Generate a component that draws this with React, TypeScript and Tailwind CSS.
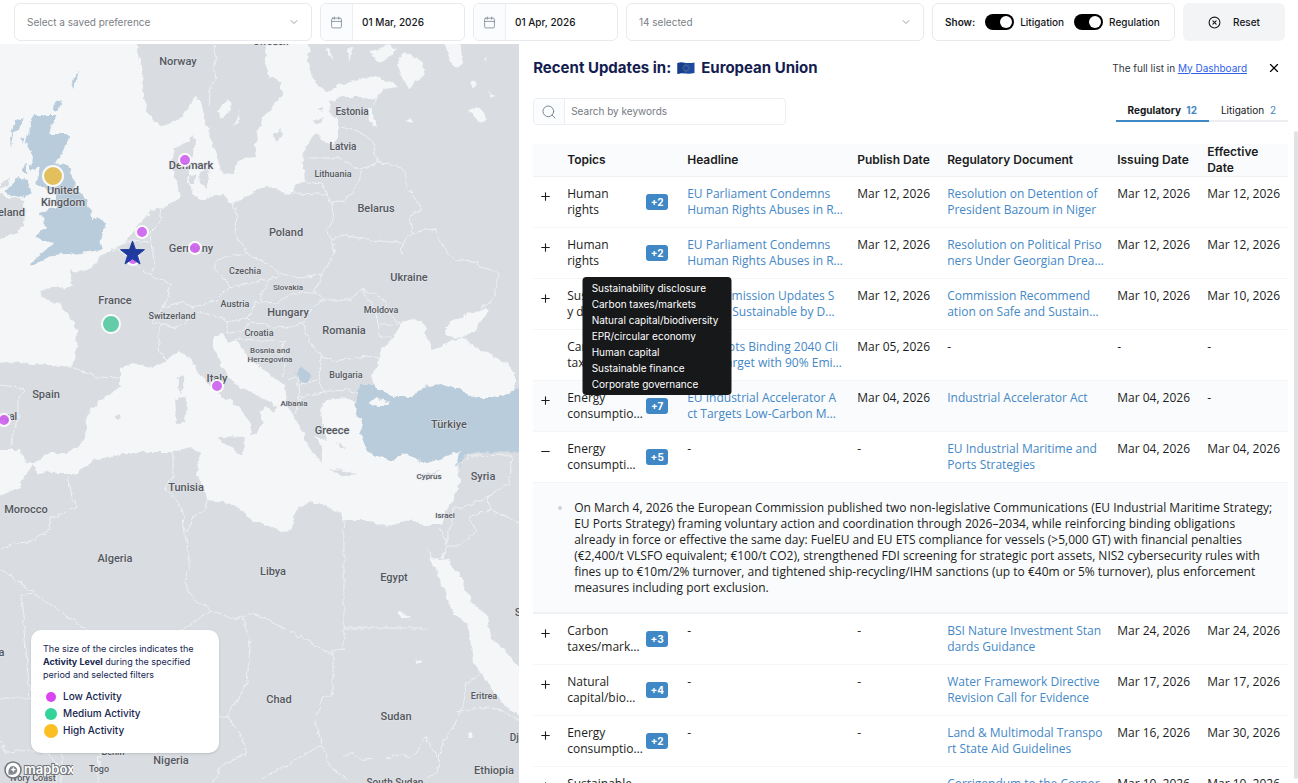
import { ReactNode, useState } from "react";
import { Calendar, ChevronDown, CircleX, Minus, Plus, Search, X } from "lucide-react";

interface UpdateRow {
  topic: string[];
  more?: string;
  moreTopics?: string[];
  headline: string[];
  published: string;
  document: string[];
  issued: string;
  effective: string;
  toggle?: "plus" | "minus";
  details?: string[];
}

const rows: UpdateRow[] = [
  {
    topic: ["Human", "rights"],
    more: "+2",
    headline: ["EU Parliament Condemns", "Human Rights Abuses in R…"],
    published: "Mar 12, 2026",
    document: ["Resolution on Detention of", "President Bazoum in Niger"],
    issued: "Mar 12, 2026",
    effective: "Mar 12, 2026",
    toggle: "plus",
  },
  {
    topic: ["Human", "rights"],
    more: "+2",
    headline: ["EU Parliament Condemns", "Human Rights Abuses in R…"],
    published: "Mar 12, 2026",
    document: ["Resolution on Political Priso", "ners Under Georgian Drea…"],
    issued: "Mar 12, 2026",
    effective: "Mar 12, 2026",
    toggle: "plus",
  },
  {
    topic: ["Sustainabilit", "y disclosure"],
    headline: ["EU Commission Updates S", "afe and Sustainable by D…"],
    published: "Mar 12, 2026",
    document: ["Commission Recommend", "ation on Safe and Sustain…"],
    issued: "Mar 10, 2026",
    effective: "Mar 10, 2026",
    toggle: "plus",
  },
  {
    topic: ["Carbon", "taxes/mark…"],
    headline: ["EU Adopts Binding 2040 Cli", "mate Target with 90% Emi…"],
    published: "Mar 05, 2026",
    document: [],
    issued: "-",
    effective: "-",
  },
  {
    topic: ["Energy", "consumptio…"],
    more: "+7",
    moreTopics: [
      "Sustainability disclosure",
      "Carbon taxes/markets",
      "Natural capital/biodiversity",
      "EPR/circular economy",
      "Human capital",
      "Sustainable finance",
      "Corporate governance",
    ],
    headline: ["EU Industrial Accelerator A", "ct Targets Low-Carbon M…"],
    published: "Mar 04, 2026",
    document: ["Industrial Accelerator Act"],
    issued: "Mar 04, 2026",
    effective: "-",
    toggle: "plus",
  },
  {
    topic: ["Energy", "consumpti…"],
    more: "+5",
    headline: [],
    published: "-",
    document: ["EU Industrial Maritime and", "Ports Strategies"],
    issued: "Mar 04, 2026",
    effective: "Mar 04, 2026",
    toggle: "minus",
    details: [
      "On March 4, 2026 the European Commission published two non-legislative Communications (EU Industrial Maritime Strategy;",
      "EU Ports Strategy) framing voluntary action and coordination through 2026–2034, while reinforcing binding obligations",
      "already in force or effective the same day: FuelEU and EU ETS compliance for vessels (>5,000 GT) with financial penalties",
      "(€2,400/t VLSFO equivalent; €100/t CO2), strengthened FDI screening for strategic port assets, NIS2 cybersecurity rules with",
      "fines up to €10m/2% turnover, and tightened ship-recycling/IHM sanctions (up to €40m or 5% turnover), plus enforcement",
      "measures including port exclusion.",
    ],
  },
  {
    topic: ["Carbon", "taxes/mark…"],
    more: "+3",
    headline: [],
    published: "-",
    document: ["BSI Nature Investment Stan", "dards Guidance"],
    issued: "Mar 24, 2026",
    effective: "Mar 24, 2026",
    toggle: "plus",
  },
  {
    topic: ["Natural", "capital/bio…"],
    more: "+4",
    headline: [],
    published: "-",
    document: ["Water Framework Directive", "Revision Call for Evidence"],
    issued: "Mar 17, 2026",
    effective: "Mar 17, 2026",
    toggle: "plus",
  },
  {
    topic: ["Energy", "consumptio…"],
    more: "+2",
    headline: [],
    published: "-",
    document: ["Land & Multimodal Transpo", "rt State Aid Guidelines"],
    issued: "Mar 16, 2026",
    effective: "Mar 30, 2026",
    toggle: "plus",
  },
  {
    topic: ["Sustainable", "finance"],
    headline: [],
    published: "-",
    document: ["Corrigendum to the Corpor", "ate Directive"],
    issued: "Mar 10, 2026",
    effective: "Mar 10, 2026",
    toggle: "plus",
  },
];

const MAINLAND =
  "M309 44 309 47 308 63 312 77 320 87 327 92 340 85 357 80 377 75 383 80 395 83 397 88 385 90 375 100 360 97 343 97 330 102 329 112 338 120 338 137 331 147 322 138 316 132 305 147 303 160 305 183 295 184 293 192 285 195 277 187 260 188 247 197 238 200 230 203 223 195 213 197 200 200 191 191 187 180 191 167 193 155 195 143 193 135 187 142 175 147 172 163 177 183 180 197 167 207 152 210 143 220 137 227 128 240 117 248 100 255 97 263 87 270 80 272 70 270 72 287 53 288 40 290 43 298 60 305 70 317 77 330 76 350 72 367 50 365 17 363 -9 362 -9 450 20 450 27 463 33 463 50 453 67 453 82 443 88 428 85 418 97 402 120 387 120 368 133 363 153 368 167 360 177 351 190 357 195 370 207 382 217 393 233 402 243 413 252 425 250 437 255 434 263 422 258 412 264 407 275 412 277 406 260 397 247 390 233 383 220 363 213 347 213 337 223 333 228 343 235 338 240 345 247 357 260 367 273 377 285 385 287 403 293 415 303 433 310 450 322 462 323 447 313 436 327 441 323 423 320 410 327 400 347 398 357 403 355 413 363 423 360 433 367 450 375 455 393 462 402 453 413 457 423 463 440 460 453 453 459 453 457 467 460 483 453 500 445 513 442 525 427 525 410 520 387 527 367 520 343 520 342 515 325 505 310 502 298 507 293 518 295 523 287 533 273 528 260 522 253 522 245 512 230 503 208 500 203 487 197 473 200 453 190 447 173 452 150 452 117 455 93 460 77 473 57 473 37 472 32 465 27 473 20 487 -9 500 -9 795 530 795 530 35 309 35Z";

const SCANDINAVIA =
  "M138 35 138 44 140 60 143 77 143 97 147 112 155 122 163 126 173 122 185 112 193 100 197 97 202 105 205 120 210 137 215 150 218 163 223 174 233 173 238 162 248 158 255 157 256 143 258 130 263 117 273 107 282 95 282 83 270 77 265 63 265 52 268 35Z";

const ISLANDS = [
  "M-9 190 6 196 23 200 26 220 17 233 -9 242Z",
  "M2 182 10 178 8 186 0 190Z",
  "M177 378 184 373 183 387 181 394Z",
  "M175 400 185 396 187 403 185 422 177 424Z",
  "M217 437 245 436 243 454 230 448Z",
  "M330 470 345 471 357 474 345 476Z",
  "M422 474 433 473 442 469 433 477Z",
  "M113 417 120 414 122 418 117 420Z",
  "M199 172 208 170 210 178 206 188 200 183Z",
  "M189 176 196 175 196 183 190 183Z",
  "M274 135 282 128 281 137 276 143Z",
  "M313 121 325 116 321 123 314 124Z",
  "M317 109 324 108 322 112Z",
  "M336 443 345 447 341 449Z",
];

const UNITED_KINGDOM =
  "M35 115 57 115 48 133 68 133 69 138 60 157 55 164 63 163 72 173 75 187 87 200 92 220 100 218 106 223 103 233 99 240 102 250 80 253 53 255 43 260 32 266 30 263 47 250 53 243 35 237 47 227 40 213 57 207 53 190 42 188 35 183 40 168 30 172 33 157 26 143 30 127Z";

const BLUE_ISLANDS = [
  "M5 192 17 178 27 180 32 193 25 198 14 196Z",
  "M15 121 24 118 20 127 13 133 11 147 10 138Z",
  "M20 137 25 139 24 145Z",
  "M22 168 26 164 26 174Z",
  "M54 103 62 100 58 111 53 109Z",
  "M71 82 79 71 77 79 73 90Z",
];

const TURKEY =
  "M357 398 360 385 373 385 375 387 393 396 410 396 423 387 440 384 460 390 477 398 498 398 515 390 530 386 530 450 493 452 477 453 463 457 460 467 456 466 459 453 453 453 440 460 423 463 413 457 402 453 393 462 375 455 367 450 360 433 363 423 355 413Z";

const WATER = [
  "M372 377 378 362 382 350 392 338 403 322 415 318 427 325 425 333 433 350 448 342 463 338 477 348 507 363 515 373 515 390 498 398 477 398 460 390 440 384 423 387 410 396 393 396 375 387Z",
  "M445 330 450 322 467 313 490 309 482 320 473 332 460 338 448 337Z",
  "M366 403 377 398 391 402 378 407Z",
  "M422 538 426 547 434 560 447 558 460 577 472 602 487 615 490 637 505 650 530 680 530 722 507 707 490 687 473 663 470 637 465 623 453 612 445 593 433 563Z",
  "M403 50 423 63 425 75 408 88 397 65Z",
  "M442 35 460 35 462 62 457 68 450 60Z",
  "M217 112 227 99 232 103 228 113 220 118Z",
  "M233 128 241 110 238 122Z",
  "M368 108 372 108 376 128 371 126Z",
  "M470 110 476 106 487 118 483 124 477 121Z",
  "M470 83 476 80 478 84 473 87Z",
  "M405 121 411 118 413 123Z",
  "M487 90 495 97 493 98Z",
  "M484 57 487 57 486 63Z",
  "M326 50 332 60 330 48Z",
  "M347 50 350 62 351 47Z",
  "M370 52 380 64 398 50 388 44 378 50Z",
  "M396 613 401 610 410 617 405 619Z",
  "M467 733 472 732 473 738 468 738Z",
  "M415 663 422 660 418 665Z",
];

const BORDERS = [
  "M213 44 217 57 213 67 216 78 210 90 209 107",
  "M340 127 353 130 368 137 373 140 378 162",
  "M377 98 371 110",
  "M307 158 342 158 360 170 378 162 403 168 407 187 423 210 410 215 413 233 402 243 370 240 343 235 332 240",
  "M360 170 360 177 352 193 343 201 330 202 322 183 305 182",
  "M293 193 325 194 332 203 333 220 326 230 332 240 335 253 322 275 300 278 280 273 260 260 247 253 235 233 237 217 233 203",
  "M402 243 401 256M413 233 435 228 442 245 455 260 473 262 498 273 497 280 495 297 480 309",
  "M247 253 228 256 217 260 214 268 230 287 250 283 268 279 285 275",
  "M268 280 262 292 262 302 277 303 293 293 315 292 322 300 350 300 362 290 375 308 378 323 380 338 390 338",
  "M322 275 318 285 315 292M322 300 313 307 303 323 310 343 322 357 335 361 355 358 367 356 380 358",
  "M362 290 383 298 388 313 400 323 380 325",
  "M230 287 217 300 193 307 180 302 163 307 167 297 171 283 153 278 143 270 130 258 117 248",
  "M162 208 160 223 150 233 152 250 155 262 152 273M120 243 134 241 149 243",
  "M163 307 152 323 160 323 158 337 160 353 167 360M160 323 173 328 182 325 197 312 213 315 227 322 248 318 257 302 262 302",
  "M227 322 227 333 240 332 252 322 248 318M252 322 268 326 285 328 303 323",
  "M236 338 256 340 273 340 285 342 280 356 285 365 283 376",
  "M322 357 318 377 323 392 345 390 358 393",
  "M287 380 298 376 300 397 295 413M300 385 322 380M300 397 323 392",
  "M72 367 97 377 120 378M-2 385 20 387 27 390 18 398 18 420 13 433 12 447",
  "M456 467 470 456 512 455",
  "M68 475 72 497 77 507 50 518 50 530 30 542 13 543 -2 552",
  "M173 453 173 477 166 487 182 510 185 533 190 567 185 582 193 598 212 610 182 630M207 500 206 507 193 517 187 533",
  "M212 610 235 620 248 614 260 615 333 655M243 617 250 645 247 683 227 717 240 733 247 753 220 767 213 783M227 717 215 715",
  "M333 650 333 696 323 696 315 720 322 745 283 767 260 780M322 745 330 767 348 780",
  "M343 520 344 540 344 649 333 650M344 628 428 628",
  "M-2 568 87 630M37 594 21 595 30 698M-2 698 60 698",
  "M483 672 467 682 462 712 442 743 437 773 427 778M457 712 472 709 490 707 507 713 522 723",
  "M343 757 352 753 360 759 373 760M387 758 398 754 410 758 421 745 426 735 430 748 437 757",
  "M440 527 446 543 442 558 452 520 453 507 463 508 487 497 510 483 512 455",
  "M487 497 490 510 468 518 477 530 460 545 447 545M490 510 522 523",
  "M0 740 6 752 30 750 48 754 58 765 56 783M62 750 62 783M100 752 98 783",
];

const LABELS: [string, number, number, number][] = [
  ["Sweden", 271, 45, 10],
  ["Norway", 178, 65, 11],
  ["Estonia", 352, 115, 10],
  ["Latvia", 343, 150, 10],
  ["Lithuania", 333, 177, 9],
  ["Belarus", 376, 212, 11],
  ["Poland", 286, 236, 11],
  ["Ukraine", 409, 281, 11],
  ["Denmark", 191, 169, 11],
  ["United", 63, 194, 11],
  ["Kingdom", 63, 206, 11],
  ["Ireland", 8, 216, 11],
  ["Germany", 191, 252, 11],
  ["Czechia", 245, 274, 9],
  ["Slovakia", 288, 290, 8],
  ["France", 115, 304, 11],
  ["Austria", 235, 307, 9],
  ["Switzerland", 172, 319, 9],
  ["Hungary", 288, 316, 11],
  ["Moldova", 381, 313, 9],
  ["Romania", 344, 334, 11],
  ["Croatia", 259, 336, 9],
  ["Bosnia and", 270, 353, 8],
  ["Herzegovina", 270, 362, 8],
  ["Bulgaria", 346, 378, 9],
  ["Italy", 217, 382, 11],
  ["Albania", 294, 406, 8],
  ["Greece", 332, 434, 11],
  ["Türkiye", 449, 428, 11],
  ["Cyprus", 429, 479, 8],
  ["Syria", 483, 480, 11],
  ["Israel", 445, 518, 8],
  ["Spain", 46, 398, 11],
  ["Portugal", -2, 420, 10],
  ["Tunisia", 186, 491, 11],
  ["Morocco", 26, 513, 11],
  ["Algeria", 115, 562, 11],
  ["Libya", 273, 575, 11],
  ["Egypt", 394, 581, 11],
  ["Mauritania", -22, 656, 11],
  ["Saudi Arabia", 546, 616, 11],
  ["Chad", 279, 703, 11],
  ["Sudan", 396, 720, 11],
  ["Eritrea", 484, 699, 9],
  ["Djibouti", 527, 741, 10],
  ["Ethiopia", 494, 774, 11],
  ["Nigeria", 171, 764, 11],
  ["Benin", 113, 755, 9],
  ["Togo", 99, 772, 9],
  ["Ivory Coast", 33, 781, 9],
  ["South Sudan", 395, 786, 10],
];

const LOW = "#d263f2";

const MARKERS: [number, number, number, string][] = [
  [53, 176, 10, "#e9bf4f"],
  [185, 160, 6, LOW],
  [142, 232, 6, LOW],
  [195, 248, 6, LOW],
  [133, 259, 6, LOW],
  [217, 386, 6, LOW],
  [4, 420, 6, LOW],
  [111, 324, 9, "#58cba3"],
];

function EuropeMap() {
  return (
    <svg
      viewBox="0 44 520 739"
      preserveAspectRatio="xMinYMin slice"
      className="block h-full w-full bg-[#f4f6f8]"
      role="img"
      aria-label="Activity map"
    >
      <defs>
        <filter id="coast" x="0" y="0" width="100%" height="100%">
          <feTurbulence type="fractalNoise" baseFrequency="0.14" numOctaves="3" seed="4" />
          <feDisplacementMap in="SourceGraphic" scale="6" xChannelSelector="R" yChannelSelector="G" />
        </filter>
        <linearGradient id="star" x1="0" y1="0" x2="0" y2="1">
          <stop offset="0" stopColor="#1d3a86" />
          <stop offset="1" stopColor="#2338b4" />
        </linearGradient>
      </defs>
      <g filter="url(#coast)">
        <rect x="-20" y="20" width="560" height="790" fill="#f4f6f8" />
        <path d={MAINLAND} fill="#d9dce1" />
        <path d={SCANDINAVIA} fill="#d9dce1" />
        {ISLANDS.map((d) => (
          <path key={d} d={d} fill="#d9dce1" />
        ))}
        <path d={UNITED_KINGDOM} fill="#b9ccdb" />
        {BLUE_ISLANDS.map((d) => (
          <path key={d} d={d} fill="#b9ccdb" />
        ))}
        <path d={TURKEY} fill="#b9ccdb" />
        <path d="M295 373 302 366 312 377 303 385Z" fill="#b9ccdb" />
        {WATER.map((d) => (
          <path key={d} d={d} fill="#f4f6f8" />
        ))}
        {BORDERS.map((d) => (
          <path key={d} d={d} fill="none" stroke="#eff2f4" strokeLinejoin="round" />
        ))}
      </g>
      <g
        fill="#54575e"
        stroke="#e4e7ea"
        strokeWidth="1"
        paintOrder="stroke"
        textAnchor="middle"
        className="font-['Roboto',sans-serif] font-medium"
      >
        {LABELS.map(([name, x, y, size]) => (
          <text key={name} x={x} y={y} fontSize={size}>
            {name}
          </text>
        ))}
      </g>
      {MARKERS.map(([x, y, r, color]) => (
        <circle
          key={`${x}-${y}`}
          cx={x}
          cy={y}
          r={r}
          fill={color}
          stroke="#fff"
          strokeWidth="2"
          opacity="0.9"
        />
      ))}
      <path
        d="M132.500 241 135.500 249.500 144.500 249.700 137.400 255.200 140 264 132.500 258.800 125 264 127.600 255.200 120.500 249.700 129.500 249.500Z"
        fill="url(#star)"
        stroke="#2040a0"
        strokeLinejoin="round"
      />
    </svg>
  );
}

function MapboxLogo() {
  return (
    <div className="absolute bottom-1 left-1 flex items-center gap-px">
      <svg viewBox="0 0 18 18" className="size-[18px]">
        <circle cx="9" cy="9" r="8" fill="#fff" stroke="#71757b" strokeWidth="1.500" />
        <path
          d="M4.500 13.500c-.5-4 .2-6 1.800-7.600a4.300 4.300 0 0 1 6 6c-1.600 1.600-3.800 2.200-7.800 1.600Z"
          fill="#85898f"
        />
        <path d="m9.300 5.800.9 2 2 .8-2 .9-.9 2-.8-2-2-.9 2-.8Z" fill="#fff" />
      </svg>
      <svg viewBox="0 0 50 16" className="h-4 w-[50px]">
        <text
          x="1"
          y="12"
          fontSize="13"
          fill="#fff"
          stroke="#71757b"
          strokeWidth="2"
          paintOrder="stroke"
          className="font-['Inter',sans-serif] font-semibold"
        >
          mapbox
        </text>
      </svg>
    </div>
  );
}

function Legend() {
  return (
    <div className="absolute bottom-[30px] left-[31px] w-[188px] rounded-[10px] bg-white px-3 pt-3 pb-[14px] text-[#16264f] shadow-sm">
      <p className="text-[9px] leading-[13px] whitespace-nowrap">
        The size of the circles indicates the
        <br />
        <strong className="font-bold">Activity Level</strong> during the specified
        <br />
        period and selected filters
      </p>
      <ul className="mt-[7px] text-[10px] leading-[17px] font-medium">
        <li className="flex items-center gap-1">
          <span className="flex w-4 justify-center">
            <span className="size-[10px] rounded-full bg-[#d946ef]" />
          </span>
          Low Activity
        </li>
        <li className="flex items-center gap-1">
          <span className="flex w-4 justify-center">
            <span className="size-3 rounded-full bg-[#34d399]" />
          </span>
          Medium Activity
        </li>
        <li className="flex items-center gap-1">
          <span className="flex w-4 justify-center">
            <span className="size-[14px] rounded-full bg-[#fbbf24]" />
          </span>
          High Activity
        </li>
      </ul>
    </div>
  );
}

function FilterSelect({ label, text }: { label: string; text: string }) {
  return (
    <div className="relative min-w-0 flex-1">
      <select
        aria-label={label}
        className="h-full w-full appearance-none rounded-md border border-[#e8eaed] bg-white px-3 text-[10px] text-[#7b7f86]"
      >
        <option>{text}</option>
      </select>
      <ChevronDown
        size={12}
        strokeWidth={1.5}
        className="pointer-events-none absolute top-1/2 right-3 -translate-y-1/2 text-[#7b7f86]"
      />
    </div>
  );
}

function DateField({ label, value }: { label: string; value: string }) {
  return (
    <label className="flex w-[145px] overflow-hidden rounded-md border border-[#e8eaed] bg-white">
      <span className="flex w-8 shrink-0 items-center justify-center border-r border-[#eceef1] bg-[#fafcfd]">
        <Calendar size={13} strokeWidth={1.5} className="text-[#7d8694]" />
      </span>
      <input
        aria-label={label}
        defaultValue={value}
        className="w-full min-w-0 px-[9px] text-[10px] font-medium text-[#15171b] outline-none"
      />
    </label>
  );
}

function Toggle({ label }: { label: string }) {
  return (
    <label className="flex items-center gap-[6px]">
      <input
        type="checkbox"
        defaultChecked
        className="h-4 w-[29px] appearance-none rounded-full bg-[#a3a7ae] p-[2px] after:block after:size-3 after:rounded-full after:bg-white checked:bg-black checked:after:ml-[13px]"
      />
      {label}
    </label>
  );
}

function FilterBar() {
  return (
    <header className="flex h-11 gap-2 bg-white pt-[3px] pr-[13px] pb-[3px] pl-[14px]">
      <FilterSelect label="Saved preference" text="Select a saved preference" />
      <DateField label="From" value="01 Mar, 2026" />
      <DateField label="To" value="01 Apr, 2026" />
      <FilterSelect label="Topics" text="14 selected" />
      <div className="flex w-[243px] items-center gap-[10px] rounded-md border border-[#e8eaed] px-3 text-[10px] font-medium whitespace-nowrap">
        <strong className="font-semibold">Show:</strong>
        <Toggle label="Litigation" />
        <Toggle label="Regulation" />
      </div>
      <button className="flex w-[102px] items-center justify-center gap-3 rounded-md bg-[#f2f4f5] text-[10px] font-medium">
        <CircleX size={13} strokeWidth={2} />
        Reset
      </button>
    </header>
  );
}

function EuFlag() {
  return (
    <svg viewBox="0 0 18 14" className="h-[14px] w-[18px]">
      <path d="M.5 2C5 .2 9 3.300 17.500 1.500v10.500C10 14 6 11 .5 13Z" fill="#1d4aa0" />
      <path d="M.5 2C3 1 5 1.400 7 1.900v10C5 11.600 3 12 .5 13Z" fill="#173d8d" />
      <g fill="#c8b75a">
        <circle cx="9" cy="4" r=".5" />
        <circle cx="11" cy="5" r=".5" />
        <circle cx="12" cy="7" r=".5" />
        <circle cx="11" cy="9.300" r=".5" />
        <circle cx="9" cy="10" r=".5" />
        <circle cx="7" cy="9" r=".5" />
        <circle cx="6" cy="7" r=".5" />
        <circle cx="7" cy="5" r=".5" />
      </g>
    </svg>
  );
}

function Lines({ lines }: { lines: string[] }) {
  return (
    <>
      {lines.map((line) => (
        <span key={line} className="block whitespace-nowrap">
          {line}
        </span>
      ))}
    </>
  );
}

function LinkCell({ lines }: { lines: string[] }) {
  return (
    <td className="px-[10px] py-[9px]">
      {lines.length > 0 ? (
        <a href="#" className="block text-[#4488c6]">
          <Lines lines={lines} />
        </a>
      ) : (
        "-"
      )}
    </td>
  );
}

function TopicTooltip({ topics }: { topics: string[] }) {
  return (
    <ul
      role="tooltip"
      className="absolute bottom-full left-1/2 z-10 mb-[3px] w-[149px] -translate-x-1/2 rounded bg-[#17181a] px-[9px] py-[3px] text-[10px] leading-4 font-normal whitespace-nowrap text-white"
    >
      {topics.map((topic) => (
        <li key={topic}>{topic}</li>
      ))}
    </ul>
  );
}

function TableRow({ row }: { row: UpdateRow }) {
  return (
    <>
      <tr
        className={
          row.moreTopics
            ? "border-b border-[#f4f5f7] bg-[#fafbfc] align-top"
            : "border-b border-[#f4f5f7] align-top"
        }
      >
        <td className="pt-[13px]">
          {row.toggle && (
            <button
              aria-label={row.toggle === "plus" ? "Expand row" : "Collapse row"}
              className="mx-auto block"
            >
              {row.toggle === "plus" ? (
                <Plus size={13} strokeWidth={2} />
              ) : (
                <Minus size={13} strokeWidth={2} />
              )}
            </button>
          )}
        </td>
        <td className="py-[9px] pr-[9px] pl-[10px]">
          <div className="flex items-center justify-between">
            <span className="block">
              <Lines lines={row.topic} />
            </span>
            {row.more && (
              <span className="relative flex h-4 w-[22px] shrink-0 items-center justify-center rounded-[3px] bg-[#3f88c5] font-['Inter',sans-serif] text-[10px] font-bold text-white">
                {row.more}
                {row.moreTopics && <TopicTooltip topics={row.moreTopics} />}
              </span>
            )}
          </div>
        </td>
        <LinkCell lines={row.headline} />
        <td className="px-[10px] py-[9px] whitespace-nowrap">{row.published}</td>
        <LinkCell lines={row.document} />
        <td className="px-[10px] py-[9px] whitespace-nowrap">{row.issued}</td>
        <td className="px-[10px] py-[9px] whitespace-nowrap">{row.effective}</td>
      </tr>
      {row.details && (
        <tr className="border-b-2 border-[#f0f1f3] bg-[#fafbfc]">
          <td colSpan={7} className="pt-[17px] pb-4 pl-[25px]">
            <ul>
              <li className="flex gap-3">
                <span className="mt-[6px] size-1 shrink-0 rounded-full bg-[#cfd3d8]" />
                <p>
                  <Lines lines={row.details} />
                </p>
              </li>
            </ul>
          </td>
        </tr>
      )}
    </>
  );
}

function HeaderCell({ children }: { children?: ReactNode }) {
  return <th className="px-[10px] text-left leading-4 font-semibold">{children}</th>;
}

function UpdatesTable() {
  return (
    <table className="mt-[19px] w-full table-fixed border-collapse text-[12px] leading-4 text-[#1b1d22]">
      <colgroup>
        <col className="w-[24px]" />
        <col className="w-[120px]" />
        <col className="w-[170px]" />
        <col className="w-[90px]" />
        <col className="w-[170px]" />
        <col className="w-[90px]" />
        <col />
      </colgroup>
      <thead>
        <tr className="h-8 border-b border-[#eff1f3] bg-[#fafbfc] whitespace-nowrap">
          <HeaderCell />
          <HeaderCell>Topics</HeaderCell>
          <HeaderCell>Headline</HeaderCell>
          <HeaderCell>Publish Date</HeaderCell>
          <HeaderCell>Regulatory Document</HeaderCell>
          <HeaderCell>Issuing Date</HeaderCell>
          <HeaderCell>
            Effective
            <br />
            Date
          </HeaderCell>
        </tr>
      </thead>
      <tbody className="font-['Open_Sans',sans-serif]">
        {rows.map((row, index) => (
          <TableRow key={index} row={row} />
        ))}
      </tbody>
    </table>
  );
}

function UpdatesPanel() {
  const [tab, setTab] = useState("regulatory");
  const active = "border-[#3f88c5] font-bold";
  const idle = "border-[#eceef1] font-normal";

  return (
    <section className="relative min-w-0 flex-1 overflow-hidden bg-white pr-[10px] pl-[14px]">
      <div className="flex h-12 items-center justify-between">
        <h1 className="flex items-center gap-[6px] text-[15px] font-bold text-[#141d4f]">
          Recent Updates in:
          <EuFlag />
          European Union
        </h1>
        <div className="flex items-center gap-5 pr-[7px] text-[10px] text-[#33363c]">
          <p>
            The full list in{" "}
            <a href="#" className="text-[#2f62e8] underline">
              My Dashboard
            </a>
          </p>
          <button aria-label="Close" className="text-black">
            <X size={14} strokeWidth={2} />
          </button>
        </div>
      </div>

      <div className="mt-[6px] flex items-start justify-between">
        <label className="flex h-[27px] w-[253px] overflow-hidden rounded border border-[#eceef1]">
          <span className="flex w-[31px] shrink-0 items-center justify-center border-r border-[#eceef1] bg-[#fafcfd]">
            <Search size={16} strokeWidth={1.5} className="text-[#7d8694]" />
          </span>
          <input
            aria-label="Search"
            placeholder="Search by keywords"
            className="w-full px-[6px] text-[10px] outline-none placeholder:text-[#75797f]"
          />
        </label>
        <div role="tablist" className="flex text-[10px]">
          <button
            role="tab"
            aria-selected={tab === "regulatory"}
            onClick={() => setTab("regulatory")}
            className={`h-6 border-b-2 px-3 pt-[3px] ${tab === "regulatory" ? active : idle}`}
          >
            Regulatory <span className="ml-[3px] text-[#3f88c5]">12</span>
          </button>
          <button
            role="tab"
            aria-selected={tab === "litigation"}
            onClick={() => setTab("litigation")}
            className={`h-6 border-b-2 px-3 pt-[3px] ${tab === "litigation" ? active : idle}`}
          >
            Litigation <span className="ml-[3px] text-[#3f88c5]">2</span>
          </button>
        </div>
      </div>

      <UpdatesTable />
      <span className="absolute top-[87px] right-0 bottom-1 w-1 rounded-full bg-[#e1e2e4]" />
    </section>
  );
}

export default function App() {
  return (
    <div className="flex h-screen flex-col overflow-hidden bg-white font-['Inter',sans-serif] text-[#15171b]">
      <FilterBar />
      <main className="flex min-h-0 flex-1">
        <section className="relative w-2/5 shrink-0 overflow-hidden">
          <EuropeMap />
          <Legend />
          <MapboxLogo />
        </section>
        <UpdatesPanel />
      </main>
    </div>
  );
}
